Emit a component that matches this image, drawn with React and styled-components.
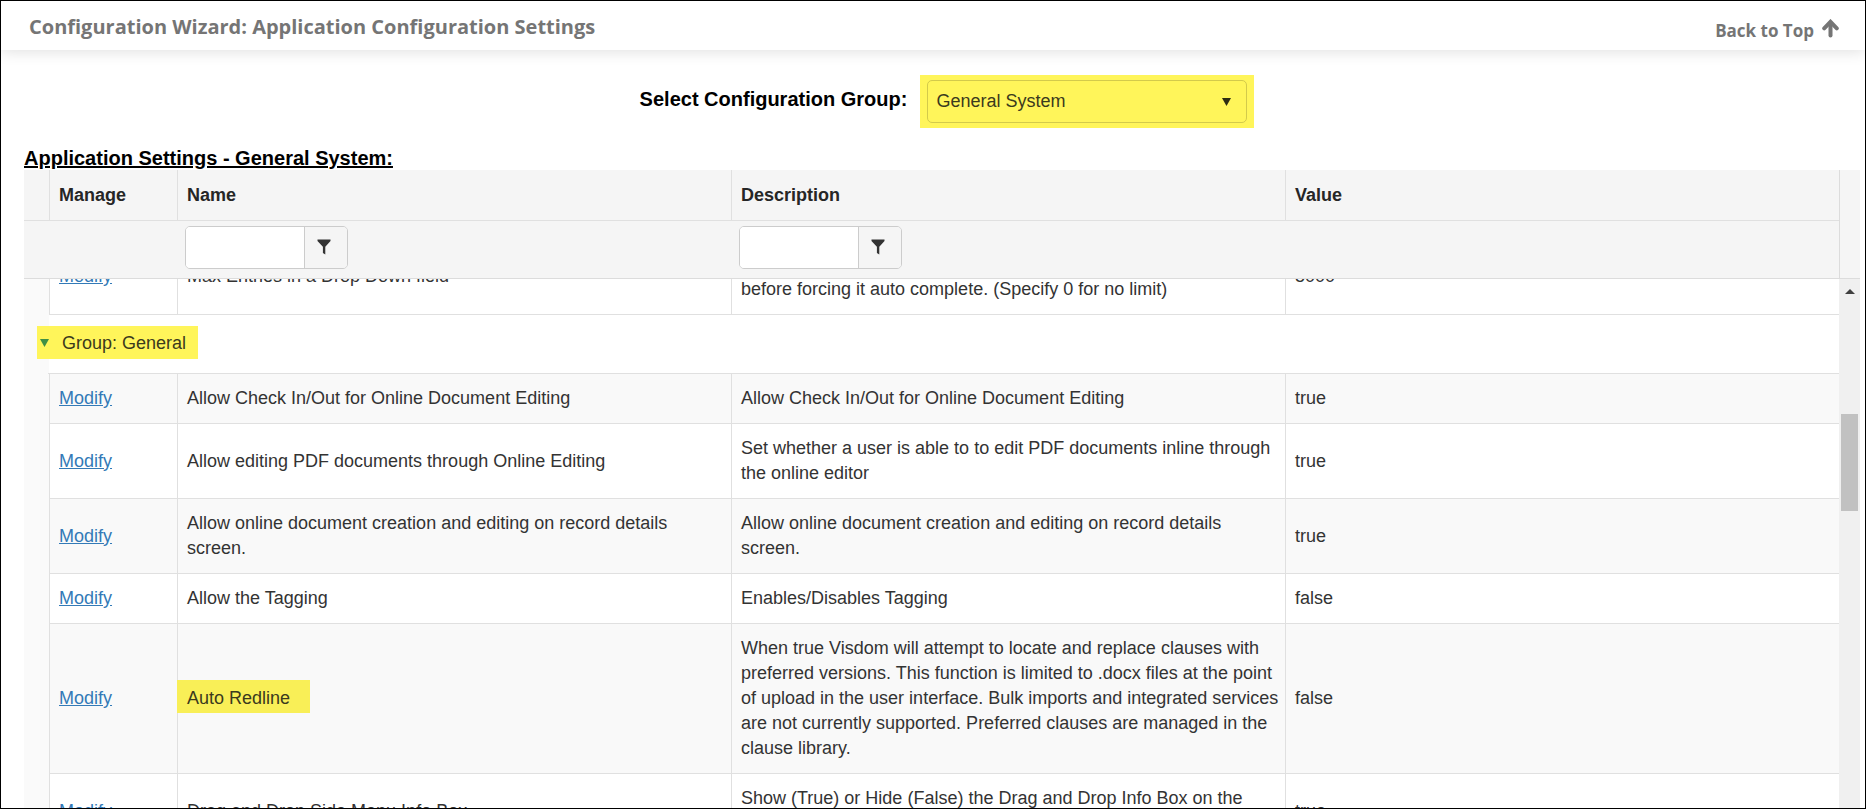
import React, { useLayoutEffect, useRef } from "react";
import styled, { createGlobalStyle } from "styled-components";

const GlobalStyle = createGlobalStyle`
  *, *::before, *::after {
    box-sizing: border-box;
  }
  body {
    margin: 0;
    background: #fff;
    color: #333;
    font-family: "Liberation Sans", Arial, sans-serif;
    font-size: 18px;
    line-height: 25px;
  }
`;

/*
Highlighter yellow: #FFF55A
Grid line: #E0E0E0
*/

const Page = styled.div`
  display: flex;
  flex-direction: column;
  height: 100vh;
  border: 1px solid #000;
`;

const Header = styled.header`
  display: flex;
  justify-content: space-between;
  align-items: center;
  height: 49px;
  flex-shrink: 0;
  padding: 2px 26px 0 28px;
  color: #757575;
  font-family: "Open Sans", sans-serif;
  font-weight: 700;
  box-shadow: 0 2px 14px rgba(0, 0, 0, 0.12);
`;

const Title = styled.h1`
  margin: 0;
  font-size: 20px;
  line-height: 28px;
`;

const TopLink = styled.a`
  display: flex;
  align-items: center;
  gap: 8px;
  padding-top: 8px;
  color: inherit;
  font-size: 17px;
  text-decoration: none;

  & > svg {
    margin-bottom: 4px;
  }
`;

const GroupPicker = styled.div`
  display: flex;
  justify-content: center;
  gap: 13px;
  padding: 25px 0 19px;
  margin-left: 28px;
`;

const PickerLabel = styled.label`
  padding-top: 12px;
  color: #000;
  font-size: 20px;
  font-weight: 700;
`;

const SelectMark = styled.div`
  display: grid;
  align-items: center;
  padding: 5px 7px;
  background: #fff55a;

  & > * {
    grid-area: 1 / 1;
  }
  & > svg {
    justify-self: end;
    margin-right: 16px;
    pointer-events: none;
  }
`;

const Select = styled.select`
  appearance: none;
  width: 320px;
  height: 43px;
  padding: 0 8px;
  border: 1px solid #d3ca4b;
  border-radius: 5px;
  background: transparent;
  color: #3b3a1d;
  font: inherit;
`;

const SectionTitle = styled.h2`
  margin: 0;
  padding-left: 23px;
  color: #000;
  font-size: 20px;
  line-height: 23px;
  text-decoration: underline;
`;

const Grid = styled.section`
  display: flex;
  flex-direction: column;
  flex: 1;
  min-height: 0;
  margin: 0 5px 0 23px;
`;

const GridHead = styled.div`
  display: flex;
  flex-shrink: 0;
  background: #f5f5f5;
  border-bottom: 1px solid #dcdcdc;
`;

const HeadGap = styled.div`
  width: 21px;
  flex-shrink: 0;
  border-left: 1px solid #dcdcdc;
`;

const GridBody = styled.div`
  display: flex;
  flex: 1;
  min-height: 0;
`;

const Scroller = styled.div`
  flex: 1;
  overflow: hidden;
`;

const Table = styled.table`
  width: 100%;
  table-layout: fixed;
  border-collapse: separate;
  border-spacing: 0;
`;

const HeadCell = styled.th`
  height: 51px;
  padding: 0 9px;
  border-left: 1px solid #e0e0e0;
  border-bottom: 1px solid #e0e0e0;
  color: #262626;
  text-align: left;

  &:first-child {
    border-left: 0;
  }
`;

const FilterCell = styled.td`
  height: 57px;
  padding: 5px 8px 0;
  vertical-align: top;
`;

const FilterBox = styled.div`
  display: flex;
  width: 163px;
  height: 43px;
  overflow: hidden;
  border: 1px solid #ccc;
  border-radius: 5px;
`;

const FilterInput = styled.input`
  flex: 1;
  min-width: 0;
  padding: 0 8px;
  border: 0;
  background: #fff;
  font: inherit;
`;

const FilterButton = styled.button`
  display: flex;
  align-items: center;
  justify-content: center;
  width: 43px;
  padding: 0 4px 2px 0;
  border: 0;
  border-left: 1px solid #ccc;
  background: #f5f5f5;
`;

const Row = styled.tr`
  background: ${(props) => (props.$shaded ? "#f9f9f9" : "#fff")};
`;

const Cell = styled.td`
  height: ${(props) => (props.$tall ? "76px" : "auto")};
  padding: 12px 4px 12px 9px;
  border-left: 1px solid #e0e0e0;
  border-bottom: 1px solid #e0e0e0;
  vertical-align: ${(props) => props.$align || "middle"};
`;

const Indent = styled.td`
  padding: 0;
  background: #fafafa;
`;

const GroupCell = styled.td`
  height: 59px;
  padding: 0 0 3px 13px;
  border-bottom: 1px solid #e0e0e0;
  border-image: linear-gradient(to right, #fafafa 25px, #e0e0e0 25px) 1;
  background: linear-gradient(to right, #fafafa 25px, #fff 25px);
`;

const GroupToggle = styled.button`
  display: flex;
  align-items: center;
  gap: 13px;
  height: 33px;
  padding: 1px 12px 0 3px;
  border: 0;
  background: #fff55a;
  color: #3b3a1d;
  font: inherit;
`;

const Mark = styled.span`
  display: inline-block;
  margin: 0 0 4px -10px;
  padding: 6px 20px 2px 10px;
  background: #f9ef57;
  color: #3b3a1d;
`;

const ModifyLink = styled.a`
  color: #337ab7;
`;

const ScrollBar = styled.div`
  width: 21px;
  flex-shrink: 0;
  background: #f0f0f0;
`;

const ScrollUp = styled.button`
  display: flex;
  align-items: center;
  justify-content: center;
  width: 100%;
  height: 25px;
  padding: 0;
  border: 0;
  background: transparent;
`;

const Thumb = styled.div`
  height: 97px;
  margin: 110px 2px 0;
  background: #c1c1c1;
`;

const TopArrow = () => (
  <svg width="17" height="19" viewBox="0 0 17 19" fill="none" stroke="currentColor" strokeLinecap="round" aria-hidden="true">
    <path d="M8.5 16.5V4" strokeWidth="4" />
    <path d="M2.2 9.3L8.5 2.8L14.8 9.3" strokeWidth="4" />
  </svg>
);

const Triangle = ({ color, up, width = 9, height = 8 }) => (
  <svg width={width} height={height} viewBox="0 0 10 10" preserveAspectRatio="none" fill={color} aria-hidden="true">
    <path d={up ? "M5 0L10 10H0z" : "M0 0H10L5 10z"} />
  </svg>
);

const Funnel = () => (
  <svg width="14" height="16" viewBox="0 0 14 16" fill="#333" aria-hidden="true">
    <path d="M0.5 0.5H13.5V2L8.3 7.8V15.5L5.9 14V7.8L0.5 2z" />
  </svg>
);

const columns = ["Manage", "Name", "Description", "Value"];

const settings = [
  {
    name: "Allow Check In/Out for Online Document Editing",
    description: "Allow Check In/Out for Online Document Editing",
    value: "true",
  },
  {
    name: "Allow editing PDF documents through Online Editing",
    description: "Set whether a user is able to to edit PDF documents inline through the online editor",
    value: "true",
  },
  {
    name: "Allow online document creation and editing on record details screen.",
    description: "Allow online document creation and editing on record details screen.",
    value: "true",
  },
  {
    name: "Allow the Tagging",
    description: "Enables/Disables Tagging",
    value: "false",
  },
  {
    name: "Auto Redline",
    description:
      "When true Visdom will attempt to locate and replace clauses with preferred versions. This function is limited to .docx files at the point of upload in the user interface. Bulk imports and integrated services are not currently supported. Preferred clauses are managed in the clause library.",
    value: "false",
    marked: true,
  },
  {
    name: "Drag and Drop Side Menu Info Box",
    description: "Show (True) or Hide (False) the Drag and Drop Info Box on the",
    value: "true",
    tall: true,
    align: "top",
  },
];

function Columns() {
  return (
    <colgroup>
      <col width="25" />
      <col width="128" />
      <col />
      <col />
      <col />
    </colgroup>
  );
}

function Filter({ label }) {
  return (
    <FilterBox>
      <FilterInput type="text" aria-label={label} />
      <FilterButton type="button" aria-label={`${label} options`}>
        <Funnel />
      </FilterButton>
    </FilterBox>
  );
}

function SettingRow({ setting, shaded }) {
  const { name, description, value, marked, tall, align } = setting;
  return (
    <Row $shaded={shaded}>
      <Indent />
      <Cell $tall={tall}>
        <ModifyLink href="#modify">Modify</ModifyLink>
      </Cell>
      <Cell>{marked ? <Mark>{name}</Mark> : name}</Cell>
      <Cell $align={align}>{description}</Cell>
      <Cell>{value}</Cell>
    </Row>
  );
}

export default function App() {
  const scroller = useRef(null);

  // open the list part way down, at the General group
  useLayoutEffect(() => {
    scroller.current.scrollTop = 40;
  }, []);

  return (
    <Page>
      <GlobalStyle />
      <Header id="top">
        <Title>Configuration Wizard: Application Configuration Settings</Title>
        <TopLink href="#top">
          Back to Top
          <TopArrow />
        </TopLink>
      </Header>

      <GroupPicker>
        <PickerLabel htmlFor="config-group">Select Configuration Group:</PickerLabel>
        <SelectMark>
          <Select id="config-group">
            <option>General System</option>
          </Select>
          <Triangle color="#2e2d12" />
        </SelectMark>
      </GroupPicker>

      <SectionTitle>Application Settings - General System:</SectionTitle>

      <Grid>
        <GridHead>
          <Table>
            <Columns />
            <thead>
              <tr>
                <HeadCell />
                {columns.map((column) => (
                  <HeadCell key={column} scope="col">{column}</HeadCell>
                ))}
              </tr>
              <tr>
                <FilterCell />
                <FilterCell />
                <FilterCell><Filter label="Name filter" /></FilterCell>
                <FilterCell><Filter label="Description filter" /></FilterCell>
                <FilterCell />
              </tr>
            </thead>
          </Table>
          <HeadGap />
        </GridHead>

        <GridBody>
          <Scroller ref={scroller}>
            <Table>
              <Columns />
              <tbody>
                <SettingRow
                  setting={{
                    name: "Max Entries in a Drop Down field",
                    description: "before forcing it auto complete. (Specify 0 for no limit)",
                    value: "5000",
                    tall: true,
                    align: "bottom",
                  }}
                />
                <tr>
                  <GroupCell colSpan={5}>
                    <GroupToggle type="button" aria-expanded="true">
                      <Triangle color="#3f8f45" />
                      Group: General
                    </GroupToggle>
                  </GroupCell>
                </tr>
                {settings.map((setting, i) => (
                  <SettingRow key={setting.name} setting={setting} shaded={i % 2 === 0} />
                ))}
              </tbody>
            </Table>
          </Scroller>
          <ScrollBar>
            <ScrollUp type="button" aria-label="Scroll up">
              <Triangle color="#404040" up width={10} height={5} />
            </ScrollUp>
            <Thumb />
          </ScrollBar>
        </GridBody>
      </Grid>
    </Page>
  );
}
